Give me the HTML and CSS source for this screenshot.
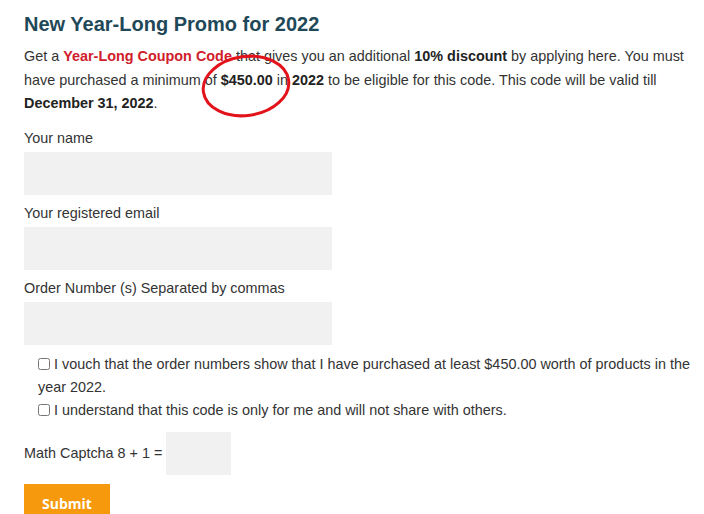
FILE: index.html
```html
<!DOCTYPE html>
<html lang="en">
<head>
<meta charset="utf-8">
<title>New Year-Long Promo for 2022</title>
<link rel="stylesheet" href="styles.css">
</head>
<body>
<main class="page">
  <h2 class="title">New Year-Long Promo for 2022</h2>
  <p class="intro">Get a <strong class="red">Year-Long Coupon Code</strong> that gives you an additional <strong>10% discount</strong> by applying here. You must have purchased a minimum of <strong>$450.00</strong> in <strong>2022</strong> to be eligible for this code. This code will be valid till <strong>December 31, 2022</strong>.</p>
  <form class="form">
    <label class="field">
      <span class="label">Your name</span>
      <input class="input" type="text">
    </label>
    <label class="field">
      <span class="label">Your registered email</span>
      <input class="input" type="email">
    </label>
    <label class="field">
      <span class="label">Order Number (s) Separated by commas</span>
      <input class="input" type="text">
    </label>
    <div class="checks">
      <label class="check"><input type="checkbox" class="box">I vouch that the order numbers show that I have purchased at least $450.00 worth of products in the year 2022.</label>
      <label class="check"><input type="checkbox" class="box">I understand that this code is only for me and will not share with others.</label>
    </div>
    <label class="captcha">
      <span>Math Captcha 8 + 1 =</span>
      <input class="captcha-input" type="text">
    </label>
    <button class="submit" type="button">Submit</button>
  </form>
  <svg class="annotation" width="100" height="72" viewBox="0 0 100 72" aria-hidden="true">
    <ellipse cx="50" cy="36" rx="43" ry="29.5" transform="rotate(-8 50 36)" fill="none" stroke="#e3131b" stroke-width="3"/>
  </svg>
</main>
</body>
</html>
```
FILE: styles.css
```css
html, body {
  margin: 0;
  padding: 0;
  background: #ffffff;
}
body {
  font-family: "Liberation Sans", Arial, sans-serif;
  font-size: 14.4px;
  color: #333333;
}
.page {
  position: relative;
  padding: 12px 6px 0 24px;
}
.title {
  margin: 0 0 9px;
  font-size: 20px;
  line-height: 24px;
  font-weight: bold;
  color: #1f4858;
}
.intro {
  margin: 0 0 11px;
  line-height: 23.5px;
}
.intro strong {
  color: #222222;
}
.intro strong.red {
  color: #d0202a;
}
.form {
  display: flex;
  flex-direction: column;
  align-items: flex-start;
}
.field {
  display: flex;
  flex-direction: column;
  margin-bottom: 7px;
}
.label {
  line-height: 23.5px;
  margin-bottom: 1.5px;
}
.input {
  width: 308px;
  height: 43px;
  box-sizing: border-box;
  border: none;
  background: #f1f1f1;
  margin: 0;
  padding: 0 10px;
  font: inherit;
}
.checks {
  margin-top: 1px;
  padding-left: 14px;
  line-height: 23px;
}
.check {
  display: block;
}
.box {
  width: 12px;
  height: 12px;
  margin: 0 4px 0 0;
  vertical-align: -1px;
}
.captcha {
  display: flex;
  align-items: center;
  gap: 4px;
  margin-top: 10px;
}
.captcha-input {
  width: 65px;
  height: 43px;
  box-sizing: border-box;
  border: none;
  background: #f1f1f1;
  margin: 0;
  font: inherit;
}
.submit {
  margin-top: 9px;
  width: 86px;
  height: 40px;
  border: none;
  background: #f7990c;
  color: #ffffff;
  font-family: "Open Sans", "Noto Sans", sans-serif;
  font-weight: 700;
  font-size: 14px;
  padding: 0;
}
.annotation {
  position: absolute;
  left: 196px;
  top: 50px;
  pointer-events: none;
}
```
